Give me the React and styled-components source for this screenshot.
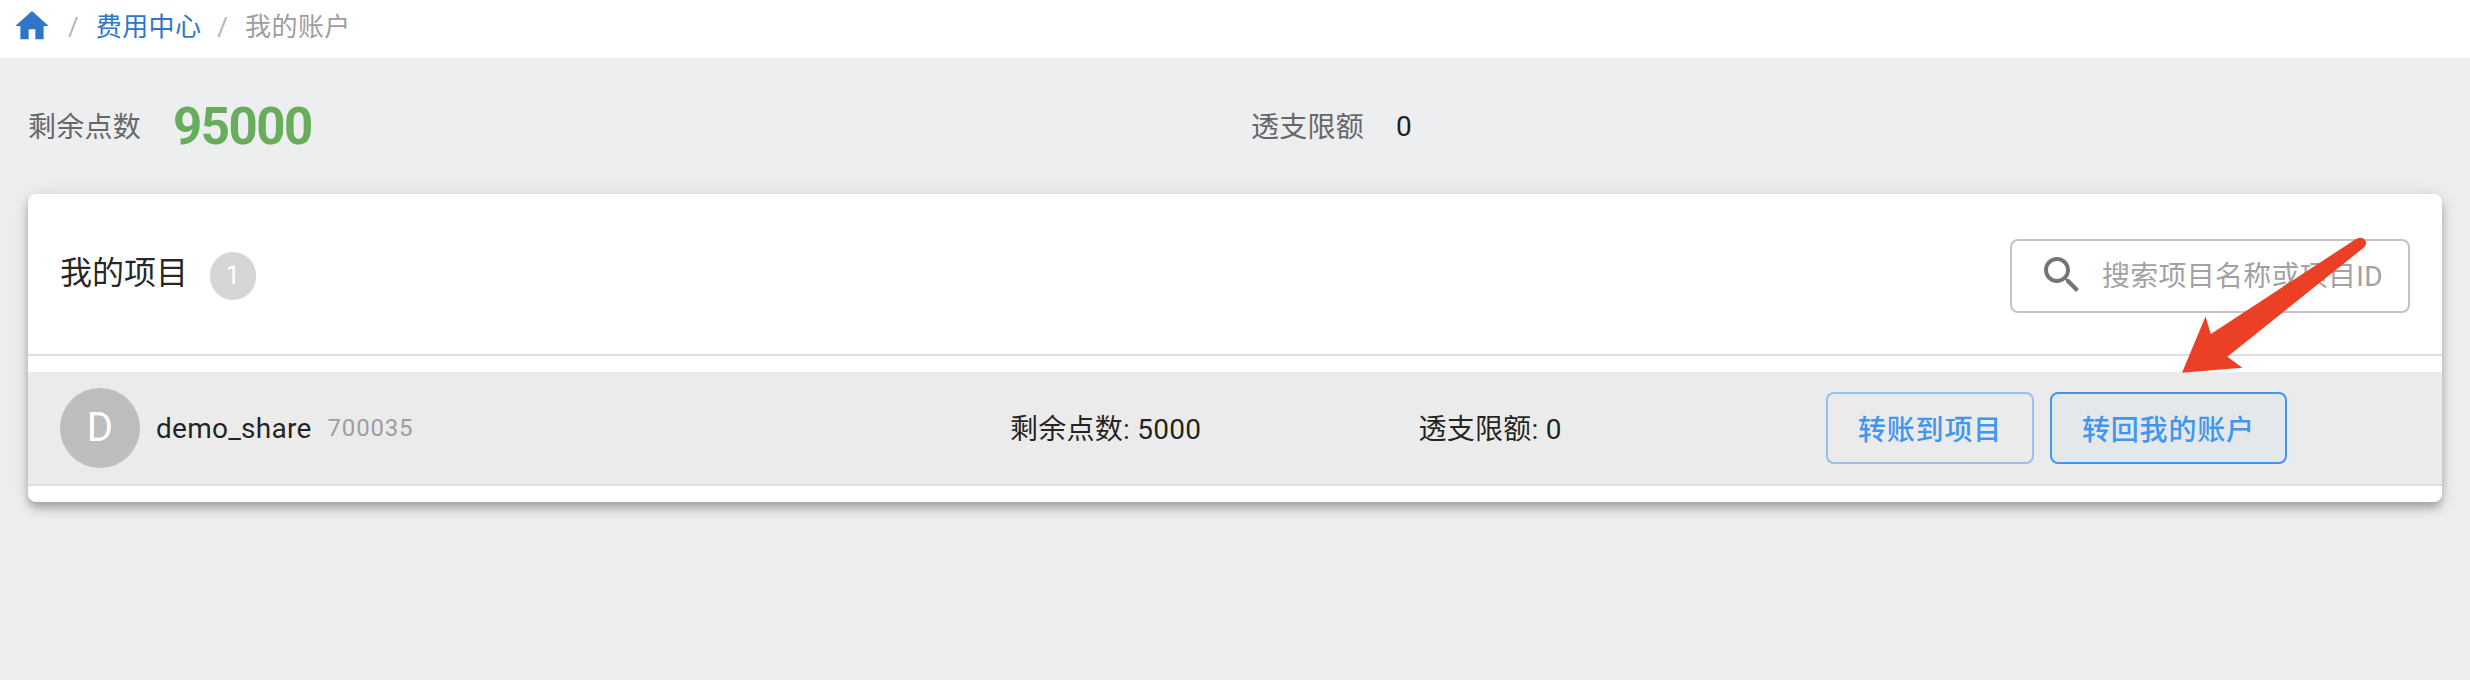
import React from "react";
import styled, { createGlobalStyle } from "styled-components";

const GlobalStyle = createGlobalStyle`
  *, *::before, *::after { box-sizing: border-box; }
  body {
    margin: 0;
    background: #edeef0;
    color: rgba(0, 0, 0, 0.87);
    font-family: Roboto, "Noto Sans CJK SC", sans-serif;
    font-size: 28px;
    letter-spacing: 0.26px;
    -webkit-font-smoothing: antialiased;
  }
`;

const Page = styled.div`
  position: relative;
  min-height: 680px;
  overflow: hidden;
`;

const Breadcrumbs = styled.nav`
  display: flex;
  align-items: center;
  height: 58px;
  padding: 0 12px 6px;
  background: #fff;
  color: #9e9e9e;
  font-size: 26px;
  line-height: 38px;
  letter-spacing: 0.4px;
`;

const HomeIcon = styled.svg`
  width: 40px;
  height: 40px;
  fill: #2f76cb;
`;

const Separator = styled.span`
  margin: 0 16.6px 0 16px;
  padding-top: 2px;
  color: #b5b5b5;
`;

const Crumb = styled.a`
  padding-top: 2px;
  color: ${(p) => (p.$link ? "#2f76cb" : "#9e9e9e")};
`;

const Summary = styled.section`
  display: flex;
  align-items: center;
  height: 136px;
  padding: 0 28px;
`;

const Stat = styled.div`
  display: flex;
  align-items: center;
  gap: 32px;
  width: ${(p) => p.$width};
`;

const StatLabel = styled.span`
  padding-bottom: 3px;
  color: #666769;
`;

const StatValue = styled.span`
  font-size: ${(p) => (p.$strong ? "51px" : "28px")};
  font-weight: ${(p) => (p.$strong ? 700 : 400)};
  letter-spacing: ${(p) => (p.$strong ? "-1.5px" : "0.26px")};
  color: ${(p) => (p.$strong ? "#67ad5b" : "#1f1f20")};
`;

const Card = styled.section`
  margin: 0 28px;
  height: 308px;
  border-radius: 8px;
  background: #fff;
  box-shadow: 0 4px 8px -2px rgba(0, 0, 0, 0.2), 0 8px 10px 0 rgba(0, 0, 0, 0.14),
    0 2px 20px 0 rgba(0, 0, 0, 0.12);
`;

const CardHeader = styled.header`
  display: flex;
  align-items: center;
  height: 162px;
  padding: 0 32px;
  border-bottom: 2px solid #e0e0e0;
`;

const Title = styled.h2`
  margin: 0 22px 0 0;
  padding-bottom: 2px;
  font-size: 32px;
  font-weight: 400;
  line-height: 48px;
  letter-spacing: 0;
`;

const CountBadge = styled.span`
  width: 46px;
  height: 48px;
  margin-top: 4px;
  border-radius: 23px;
  background: #d5d5d5;
  color: #fff;
  font-size: 26px;
  line-height: 47px;
  text-align: center;
`;

const SearchField = styled.label`
  display: flex;
  align-items: center;
  width: 400px;
  height: 74px;
  margin: 4px 0 0 auto;
  padding: 0 26px;
  border: 2px solid #c4c4c4;
  border-radius: 8px;
`;

const SearchIcon = styled.svg`
  flex: none;
  width: 48px;
  height: 48px;
  margin-top: -2px;
  fill: #757575;
`;

const SearchInput = styled.input`
  flex: none;
  width: 290px;
  margin: 0 0 0 16px;
  padding: 0;
  border: 0;
  outline: 0;
  background: transparent;
  font: inherit;
  letter-spacing: inherit;
  &::placeholder {
    color: #a2a2a2;
    opacity: 1;
  }
`;

const ProjectRow = styled.div`
  display: flex;
  align-items: center;
  height: 114px;
  margin-top: 16px;
  padding: 0 32px;
  border-bottom: 2px solid #e0e0e0;
  background: #ebebeb;
`;

const Avatar = styled.span`
  width: 80px;
  height: 80px;
  margin-right: 16px;
  border-radius: 50%;
  background: #bdbdbd;
  color: #fff;
  font-size: 40px;
  line-height: 80px;
  text-align: center;
`;

const Cell = styled.div`
  display: flex;
  align-items: center;
  flex: none;
  width: ${(p) => p.$width}px;
`;

const BalanceCell = styled(Cell)`
  padding-bottom: 2px;
`;

const ProjectId = styled.span`
  margin-left: 16px;
  color: #9e9e9e;
  font-size: 24px;
  letter-spacing: 0.8px;
`;

const Actions = styled.div`
  display: flex;
  gap: 16px;
`;

const ActionButton = styled.button`
  height: 72px;
  padding: 0 30px;
  border: 2px solid ${(p) => (p.$active ? "#4196ed" : "#98c1ec")};
  border-radius: 8px;
  background: ${(p) => (p.$active ? "#e4e8eb" : "transparent")};
  color: #4196ed;
  font: inherit;
  font-weight: 500;
  letter-spacing: 0.8px;
  white-space: nowrap;
`;

const PointerArrow = styled.svg`
  position: absolute;
  left: 2180px;
  top: 236px;
  width: 190px;
  height: 140px;
  fill: #eb4025;
  pointer-events: none;
`;

export default function App() {
  return (
    <Page>
      <GlobalStyle />
      <Breadcrumbs>
        <HomeIcon viewBox="0 0 24 24">
          <path d="M10 20v-6h4v6h5v-8h3L12 3 2 12h3v8z" />
        </HomeIcon>
        <Separator>/</Separator>
        <Crumb $link>费用中心</Crumb>
        <Separator>/</Separator>
        <Crumb>我的账户</Crumb>
      </Breadcrumbs>

      <Summary>
        <Stat $width="1223px">
          <StatLabel>剩余点数</StatLabel>
          <StatValue $strong>95000</StatValue>
        </Stat>
        <Stat $width="auto">
          <StatLabel>透支限额</StatLabel>
          <StatValue>0</StatValue>
        </Stat>
      </Summary>

      <Card>
        <CardHeader>
          <Title>我的项目</Title>
          <CountBadge>1</CountBadge>
          <SearchField>
            <SearchIcon viewBox="0 0 24 24">
              <path d="M15.5 14h-.79l-.28-.27C15.41 12.59 16 11.11 16 9.5 16 5.91 13.09 3 9.5 3S3 5.91 3 9.5 5.91 16 9.5 16c1.61 0 3.09-.59 4.23-1.57l.27.28v.79l5 4.99L20.49 19l-4.99-5zm-6 0C7.01 14 5 11.99 5 9.5S7.01 5 9.5 5 14 7.01 14 9.5 11.99 14 9.5 14z" />
            </SearchIcon>
            <SearchInput placeholder="搜索项目名称或项目ID" />
          </SearchField>
        </CardHeader>

        <ProjectRow>
          <Cell $width={950}>
            <Avatar>D</Avatar>
            <span>demo_share</span>
            <ProjectId>700035</ProjectId>
          </Cell>
          <BalanceCell $width={408.5}>剩余点数: 5000</BalanceCell>
          <BalanceCell $width={407.5}>透支限额: 0</BalanceCell>
          <Actions>
            <ActionButton>转账到项目</ActionButton>
            <ActionButton $active>转回我的账户</ActionButton>
          </Actions>
        </ProjectRow>
      </Card>

      <PointerArrow viewBox="0 0 190 140">
        <path d="M2 136.7 L25.5 80.5 L30.8 98 L174.5 4 Q180 0 184 3 Q188 7 184.5 11 L47.4 120.8 L62.4 131.8 Z" />
      </PointerArrow>
    </Page>
  );
}
